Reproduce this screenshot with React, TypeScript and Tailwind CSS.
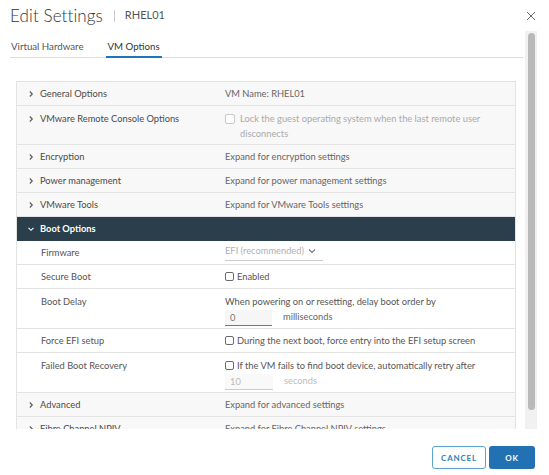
import React from "react";

const FONT = { fontFamily: "Lato, 'Open Sans', sans-serif" };

function Chevron({ open, light }: { open?: boolean; light?: boolean }) {
  return (
    <svg width="8" height="8" viewBox="0 0 8 8" className="shrink-0">
      {open ? (
        <polyline points="1.5,2.8 4,5.3 6.5,2.8" fill="none" stroke={light ? "#ffffff" : "#555"} strokeWidth="1.1" />
      ) : (
        <polyline points="2.8,1.5 5.3,4 2.8,6.5" fill="none" stroke="#555" strokeWidth="1.1" />
      )}
    </svg>
  );
}

function Box({ disabled }: { disabled?: boolean }) {
  return (
    <span
      className={
        "inline-block shrink-0 rounded-[2px] border bg-white " +
        (disabled ? "w-[10px] h-[10px] border-[#c8c8c8]" : "w-[9px] h-[9px] border-[#6a6a6a]")
      }
    />
  );
}

function CollapsedRow({ label, value }: { label: string; value: string }) {
  return (
    <div className="grid grid-cols-[208px_1fr] h-[24px] items-center bg-[#f8f8f8] border-b border-[#e3e3e3] whitespace-nowrap">
      <div className="flex items-center pl-[10px] gap-[5px] text-[#4a4a4a]">
        <Chevron />
        <span>{label}</span>
      </div>
      <div className="text-[#666]">{value}</div>
    </div>
  );
}

function SubRow({ label, children, tall }: { label: string; children: React.ReactNode; tall?: boolean }) {
  return (
    <div
      className={
        "grid grid-cols-[208px_1fr] bg-white border-b border-[#e3e3e3] whitespace-nowrap " +
        (tall ? "h-[40px] items-start pt-[6px]" : "h-[24px] items-center")
      }
    >
      <div className="pl-[24px] text-[#555]">{label}</div>
      <div className="text-[#555]">{children}</div>
    </div>
  );
}

export default function App() {
  return (
    <div className="w-[549px] h-[475px] bg-white overflow-hidden flex flex-col" style={FONT}>
      {/* header */}
      <div className="h-[31px] flex items-center justify-between pl-[10px] pr-[13px]">
        <div className="flex items-center">
          <span className="text-[17px] font-light text-[#333] tracking-[0.1px]">Edit Settings</span>
          <span className="w-px h-[12px] bg-[#ccc] ml-[11px] mr-[10px]" />
          <span className="text-[11px] text-[#555]">RHEL01</span>
        </div>
        <svg width="10" height="10" viewBox="0 0 10 10">
          <path d="M1 1 L9 9 M9 1 L1 9" stroke="#666" strokeWidth="1" />
        </svg>
      </div>

      {/* body */}
      <div className="h-[398px] flex">
        <div className="w-[513px] ml-[10px] overflow-hidden text-[9.3px]">
          {/* tabs */}
          <div className="h-[27px] flex items-end border-b border-[#dcdcdc] text-[9.7px]">
            <div className="pb-[3px] pl-[1px] text-[#555]">Virtual Hardware</div>
            <div className="ml-[22px] px-[2px] pb-[2px] text-[#333] border-b-2 border-[#1d75b8] -mb-px">VM Options</div>
          </div>

          {/* panel */}
          <div className="mt-[23px] ml-[6px] w-[500px] border border-[#e3e3e3] border-b-0">
            <CollapsedRow label="General Options" value="VM Name: RHEL01" />
            <div className="grid grid-cols-[208px_1fr] h-[39px] items-start pt-[5px] bg-[#f8f8f8] border-b border-[#e3e3e3] whitespace-nowrap">
              <div className="flex items-center pl-[10px] gap-[5px] text-[#4a4a4a] mt-[1px]">
                <Chevron />
                <span>VMware Remote Console Options</span>
              </div>
              <div className="flex items-start gap-[5px] text-[#aaa] leading-[15px]">
                <span className="mt-[2px]">
                  <Box disabled />
                </span>
                <span>
                  Lock the guest operating system when the last remote user
                  <br />
                  disconnects
                </span>
              </div>
            </div>
            <CollapsedRow label="Encryption" value="Expand for encryption settings" />
            <CollapsedRow label="Power management" value="Expand for power management settings" />
            <CollapsedRow label="VMware Tools" value="Expand for VMware Tools settings" />

            <div className="h-[24px] flex items-center bg-[#2b3e4b] pl-[10px] gap-[5px]">
              <Chevron open light />
              <span className="font-bold text-white">Boot Options</span>
            </div>

            <SubRow label="Firmware">
              <div className="w-[98px] flex items-center border-b border-[#ccc] pb-[2px] text-[#b0b0b0]">
                <span>EFI (recommended)</span>
                <svg width="8" height="6" viewBox="0 0 8 6" className="ml-[4px]">
                  <polyline points="1,1.5 4,4.5 7,1.5" fill="none" stroke="#777" strokeWidth="1.1" />
                </svg>
              </div>
            </SubRow>
            <SubRow label="Secure Boot">
              <label className="flex items-center gap-[3px]">
                <Box />
                <span>Enabled</span>
              </label>
            </SubRow>
            <SubRow label="Boot Delay" tall>
              <div className="leading-[13px]">When powering on or resetting, delay boot order by</div>
              <div className="flex items-end mt-[2px]">
                <div className="w-[47px] h-[16px] bg-[#f6f6f6] border-b border-[#777] pl-[5px] flex items-center text-[#777]">0</div>
                <span className="ml-[11px] mb-[2px] text-[#666]">milliseconds</span>
              </div>
            </SubRow>
            <SubRow label="Force EFI setup">
              <label className="flex items-center gap-[3px]">
                <Box />
                <span>During the next boot, force entry into the EFI setup screen</span>
              </label>
            </SubRow>
            <SubRow label="Failed Boot Recovery" tall>
              <label className="flex items-center gap-[3px] leading-[13px]">
                <Box />
                <span>If the VM fails to find boot device, automatically retry after</span>
              </label>
              <div className="flex items-end mt-[2px]">
                <div className="w-[48px] h-[16px] bg-[#f9f9f9] border-b border-[#ccc] pl-[5px] flex items-center text-[#bbb]">10</div>
                <span className="ml-[11px] mb-[2px] text-[#bbb]">seconds</span>
              </div>
            </SubRow>
            <CollapsedRow label="Advanced" value="Expand for advanced settings" />
            <CollapsedRow label="Fibre Channel NPIV" value="Expand for Fibre Channel NPIV settings" />
          </div>
        </div>

        {/* scrollbar */}
        <div className="ml-[2px] w-[12px] bg-[#f1f1f1] flex justify-center pt-[2px]">
          <div className="w-[7px] h-[377px] rounded-full bg-[#b9b9b9]" />
        </div>
      </div>

      {/* footer */}
      <div className="flex justify-end gap-[3px] pr-[14px] pt-[17px]">
        <button className="w-[54px] h-[23px] rounded-[3px] border border-[#5da3cf] bg-white text-[#2f7eb8] text-[8px] font-bold tracking-[0.8px]">
          CANCEL
        </button>
        <button className="w-[46px] h-[23px] rounded-[3px] bg-[#2272b3] text-white text-[8px] font-bold tracking-[0.8px]">
          OK
        </button>
      </div>
    </div>
  );
}
